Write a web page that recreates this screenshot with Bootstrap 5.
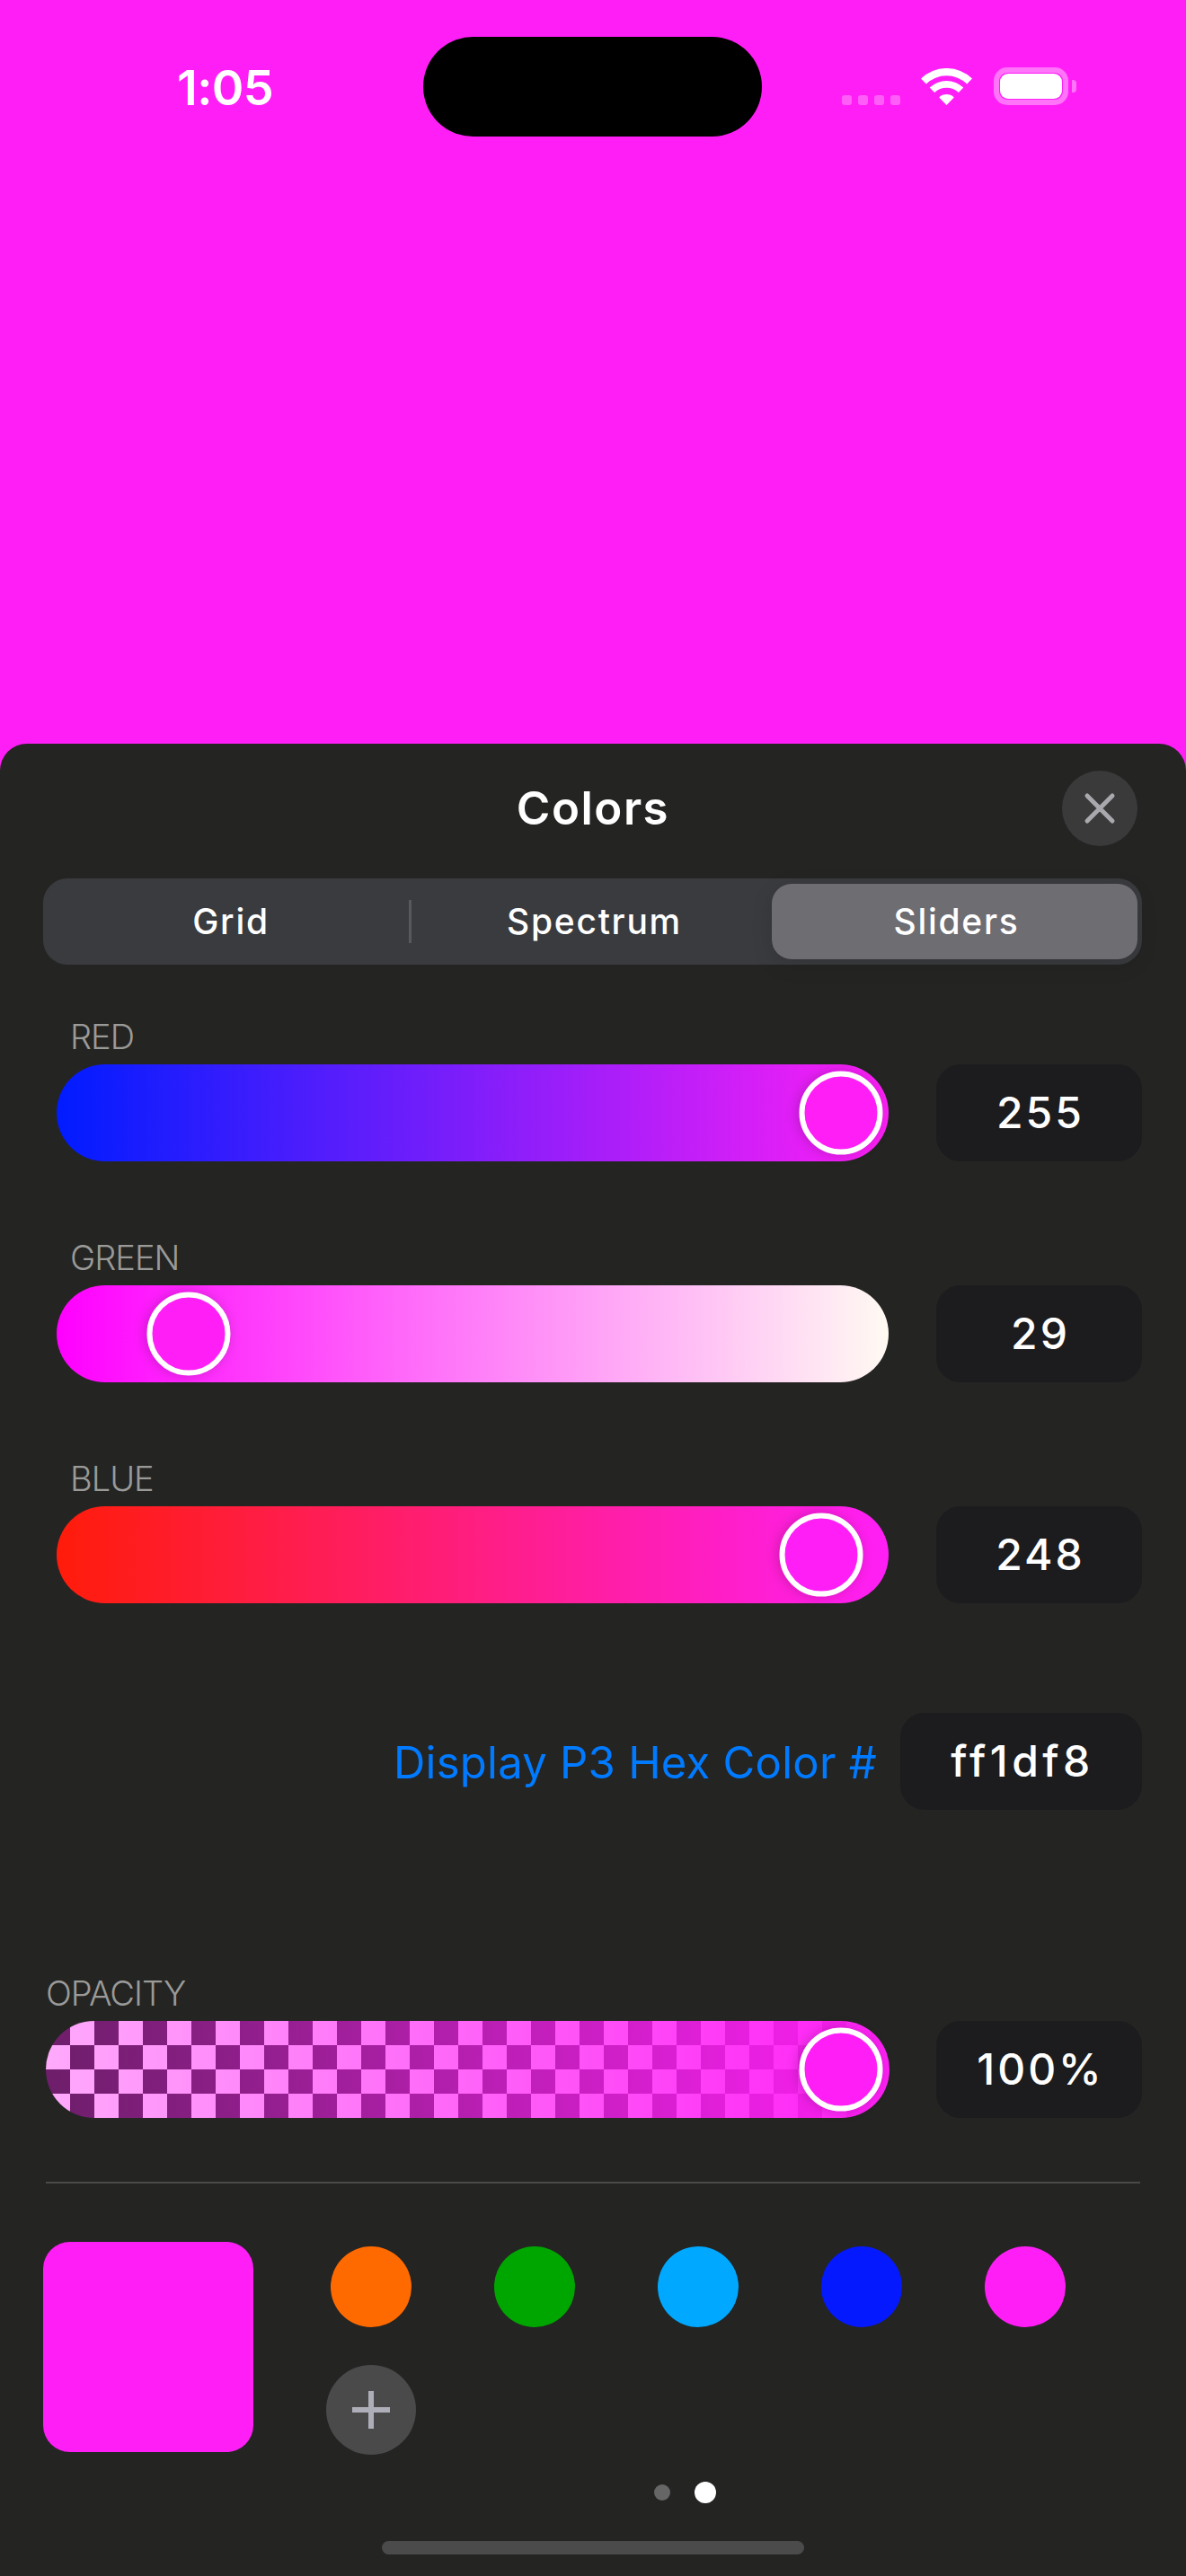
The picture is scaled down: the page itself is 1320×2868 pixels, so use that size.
<!DOCTYPE html>
<html lang="en">
<head>
  <meta charset="UTF-8">
  <meta name="viewport" content="width=device-width, initial-scale=1.0">
  <title>Colors</title>
  <link href="https://cdn.jsdelivr.net/npm/bootstrap@5.3.0/dist/css/bootstrap.min.css" rel="stylesheet">
  <style>
    body {
      background: #ff1ff6;
      font-family: Inter, "Liberation Sans", sans-serif;
      color: #fff;
      width: 1320px;
      min-height: 2868px;
    }

    /* status bar */
    .top-area { height: 828px; padding-top: 41px; }
    .status-row { display: grid; grid-template-columns: 471px 377px 1fr; height: 111px; }
    .clock { padding: 24px 0 0 197px; font-size: 54px; font-weight: 600; line-height: 66px; letter-spacing: -.6px; }
    .island { background: #000; border-radius: 56px; }
    .status-icons { height: 76px; padding-left: 89px; gap: 23px; }
    .sig-dots { gap: 7px; }
    .sig-dots span { width: 11px; height: 11px; border-radius: 3px; background: rgba(255,255,255,.28); }
    .batt { width: 83px; height: 42px; margin-left: 1px; border: 6px solid rgba(255,255,255,.38); border-radius: 15px; padding: 1px; position: relative; }
    .batt-fill { height: 100%; background: #fff; border-radius: 9px; }
    .batt-nub { position: absolute; left: 81px; top: 8px; width: 5px; height: 14px; border-radius: 0 4px 4px 0; background: rgba(255,255,255,.38); }

    /* sheet */
    .sheet { background: #242423; height: 2040px; border-radius: 30px 30px 0 0; padding-top: 30px; }
    .sheet-head { height: 84px; position: relative; }
    .sheet-title { font-size: 51px; font-weight: 600; letter-spacing: 1.5px; line-height: 84px; }
    .close-btn { position: absolute; right: 54px; top: 0; width: 84px; height: 84px; border-radius: 50%; background: #3a3a3b; border: 0; padding: 0; }

    .seg { margin: 36px 49px 0 48px; height: 96px; background: #3a3b3e; border-radius: 27px; padding: 6px 5px; }
    .seg-item { font-size: 39px; font-weight: 500; letter-spacing: 1.7px; color: #fff; line-height: 84px; text-align: center; border-radius: 22px; }
    .seg-grid { width: 403px; padding-left: 6px; }
    .seg-spec { width: 402px; padding-left: 6px; }
    .seg-on { width: 408px; padding-left: 4px; background: #6e6d72; box-shadow: 0 6px 24px rgba(0,0,0,.12); }
    .seg-sep { width: 3px; height: 48px; margin-top: 18px; background: #59595c; }

    .ch-label { height: 41px; margin-bottom: 11px; font-size: 38px; line-height: 43px; color: #9a9a98; font-weight: 300; letter-spacing: -1px; }
    .ch-block { margin: 0 49px 0 63px; }
    .ch-block .ch-label { padding-left: 15px; }
    .track { position: relative; height: 108px; border-radius: 54px; flex: 1 1 auto; }
    .thumb { position: absolute; top: 50%; width: 93px; height: 93px; border-radius: 50%; background: #ff1ff6; border: 6px solid #fff; transform: translate(-50%, -50%); box-shadow: -2px 0 14px rgba(0,0,0,.2); }
    .val-box { width: 229px; height: 108px; margin-left: 53px; padding-left: 3px; flex: 0 0 auto; background: #1c1c1e; border-radius: 27px; font-size: 48px; font-weight: 500; letter-spacing: 3px; line-height: 108px; text-align: center; }

    .t-red { background: linear-gradient(90deg, #001cff, #ff1ff6); }
    .t-green { background: linear-gradient(90deg, #ff00ff, #fffaf2); }
    .t-blue { background: linear-gradient(90deg, #ff1c0a, #ff1ff6); }
    .t-alpha {
      background: linear-gradient(90deg, rgba(255,31,246,.38), #ff1ff6), repeating-conic-gradient(#fff 0 25%, #141e14 0 50%);
      background-size: 100% 100%, 54px 54px;
      background-position: 0 0, 0 0;
    }

    .gap-green { margin-top: 86px; }
    .gap-blue { margin-top: 86px; }
    .hex-row { margin: 122px 49px 0 0; gap: 26px; }
    .hex-lbl { font-size: 49px; line-height: 62px; padding-top: 3px; color: #007aff; letter-spacing: .25px; }
    .hex-box { width: 269px; margin-left: 0; letter-spacing: 4.5px; }

    .alpha-block { margin: 183px 49px 0 51px; }
    .alpha-block .val-box { margin-left: 52px; }

    .rule-line { height: 2px; margin: 71px 51px 0; background: #4a4a4a; }

    .swatch-row { margin: 65px 0 0 48px; }
    .big-swatch { width: 234px; height: 234px; border-radius: 30px; background: #ff1ff6; }
    .preset-grid { display: grid; grid-template-columns: repeat(5, 182px); grid-template-rows: 90px 101px; row-gap: 41px; margin-left: 40px; padding-top: 5px; justify-items: center; align-items: center; }
    .preset { width: 90px; height: 90px; border-radius: 50%; }
    .add-btn { width: 100px; height: 100px; border-radius: 50%; background: #4a4a4a; border: 0; padding: 0; }

    .page-dots { margin-top: 30px; height: 24px; padding-left: 728px; gap: 27px; }
    .pg-dot { width: 18px; height: 18px; border-radius: 50%; background: #666; }
    .pg-dot.on { width: 24px; height: 24px; background: #fff; }
    .home-bar { width: 470px; height: 15px; margin: 42px auto 0; border-radius: 8px; background: #4b4b4b; }
  </style>
</head>
<body class="m-0">
  <div class="top-area">
    <div class="status-row">
      <div class="clock">1:05</div>
      <div class="island"></div>
      <div class="status-icons d-flex align-items-end">
        <div class="sig-dots d-flex"><span></span><span></span><span></span><span></span></div>
        <svg width="57" height="41" viewBox="0 0 57 41" fill="#fff" class="d-block">
          <path d="M0 11.5A41 41 0 0 1 57 11.5L51.2 17.5A32.7 32.7 0 0 0 5.8 17.5Z"/>
          <path d="M9.7 21.6A27 27 0 0 1 47.3 21.6L41.9 27.1A19.3 19.3 0 0 0 15.1 27.1Z"/>
          <path d="M20.2 32.4A12 12 0 0 1 36.8 32.4L28.5 41Z"/>
        </svg>
        <div class="batt"><div class="batt-fill"></div><div class="batt-nub"></div></div>
      </div>
    </div>
  </div>

  <div class="sheet">
    <div class="sheet-head text-center">
      <div class="sheet-title">Colors</div>
      <button class="close-btn d-flex align-items-center justify-content-center" type="button" aria-label="Close">
        <svg width="36" height="36" viewBox="0 0 36 36" fill="none" stroke="#a9a9ad" stroke-width="5" stroke-linecap="round"><path d="M4 4L32 32M32 4L4 32"/></svg>
      </button>
    </div>

    <div class="seg d-flex">
      <div class="seg-item seg-grid">Grid</div>
      <div class="seg-sep"></div>
      <div class="seg-item seg-spec">Spectrum</div>
      <div class="seg-item seg-on">Sliders</div>
    </div>

    <div class="ch-block" style="margin-top:59px">
      <div class="ch-label">RED</div>
      <div class="d-flex">
        <div class="track t-red"><div class="thumb" style="left:94.3%"></div></div>
        <div class="val-box">255</div>
      </div>
    </div>

    <div class="ch-block gap-green">
      <div class="ch-label">GREEN</div>
      <div class="d-flex">
        <div class="track t-green"><div class="thumb" style="left:15.9%"></div></div>
        <div class="val-box">29</div>
      </div>
    </div>

    <div class="ch-block gap-blue">
      <div class="ch-label">BLUE</div>
      <div class="d-flex">
        <div class="track t-blue"><div class="thumb" style="left:91.9%"></div></div>
        <div class="val-box">248</div>
      </div>
    </div>

    <div class="hex-row d-flex justify-content-end align-items-center">
      <div class="hex-lbl">Display P3 Hex Color #</div>
      <div class="val-box hex-box">ff1df8</div>
    </div>

    <div class="alpha-block">
      <div class="ch-label">OPACITY</div>
      <div class="d-flex">
        <div class="track t-alpha"><div class="thumb" style="left:94.2%"></div></div>
        <div class="val-box">100%</div>
      </div>
    </div>

    <div class="rule-line"></div>

    <div class="swatch-row d-flex">
      <div class="big-swatch"></div>
      <div class="preset-grid">
        <div class="preset" style="background:#ff6a00"></div>
        <div class="preset" style="background:#00a600"></div>
        <div class="preset" style="background:#00a9ff"></div>
        <div class="preset" style="background:#0519ff"></div>
        <div class="preset" style="background:#ff1ff6"></div>
        <button class="add-btn d-flex align-items-center justify-content-center" type="button" aria-label="Add">
          <svg width="42" height="42" viewBox="0 0 42 42" fill="#aeaeb8"><path d="M18 0h6v18h18v6H24v18h-6V24H0v-6h18z"/></svg>
        </button>
      </div>
    </div>

    <div class="page-dots d-flex align-items-center">
      <div class="pg-dot"></div>
      <div class="pg-dot on"></div>
    </div>
    <div class="home-bar"></div>
  </div>

  <script src="https://cdn.jsdelivr.net/npm/bootstrap@5.3.0/dist/js/bootstrap.bundle.min.js"></script>
</body>
</html>
